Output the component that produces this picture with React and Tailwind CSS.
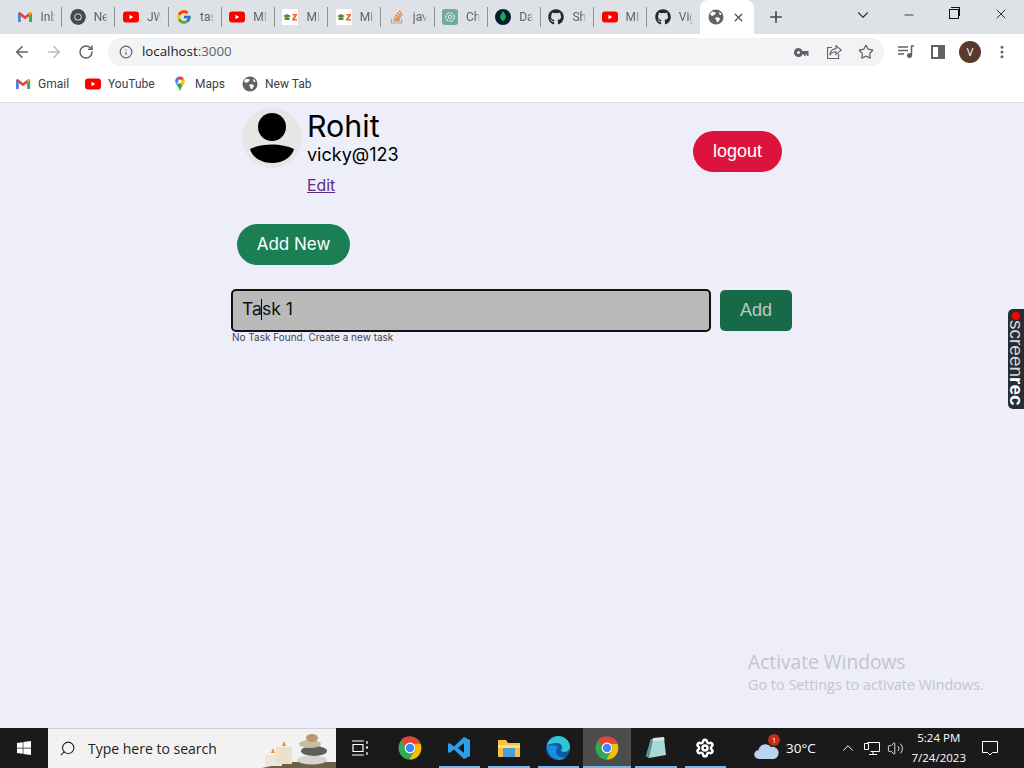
import React from 'react';
import { ArrowLeft, ArrowRight, RotateCw, Info, Star, X, Plus, ChevronDown, Minus, MoreVertical, Search, ChevronUp, Volume2, Settings } from 'lucide-react';
import { FaGithub, FaWindows } from 'react-icons/fa';
import { FcGoogle } from 'react-icons/fc';

const Gmail = ({ size = 16 }) => (
  <svg width={size} height={size} viewBox="0 0 16 16">
    <path d="M1 4v9h2.600V7l4.400 3.200L12.400 7v6H15V4l-1.500-1.200L8 7 2.500 2.800z" fill="#ea4335" />
    <path d="M1 4v9h2.600V6z" fill="#4285f4" />
    <path d="M15 4v9h-2.600V6z" fill="#34a853" />
    <path d="M15 4l-2.600 3V3.900l1.100-1.100z" fill="#fbbc04" />
  </svg>
);

const ChromeLogo = ({ size = 24, mono }) => (
  <svg width={size} height={size} viewBox="0 0 24 24">
    <circle cx="12" cy="12" r="11.500" fill={mono ? '#45484d' : '#34a853'} />
    <path d="M12 .5A11.500 11.500 0 0 1 22.200 7H12a5 5 0 0 0-4.700 3.200L3 3.800A11.500 11.500 0 0 1 12 .5z" fill={mono ? '#45484d' : '#ea4335'} />
    <path d="M22.500 8a11.500 11.500 0 0 1-11 15.500l5-8.500a5 5 0 0 0-.5-7z" fill={mono ? '#45484d' : '#fbbc04'} />
    <circle cx="12" cy="12" r="5.400" fill="#fff" />
    <circle cx="12" cy="12" r="4.200" fill={mono ? '#45484d' : '#4285f4'} />
  </svg>
);

const YouTube = () => (
  <svg width="16" height="16" viewBox="0 0 16 16">
    <rect y="2.500" width="16" height="11" rx="3" fill="#f00" />
    <path d="M6.500 5.800v4.400L10.300 8z" fill="#fff" />
  </svg>
);

const Ez = () => (
  <svg width="16" height="16" viewBox="0 0 16 16">
    <rect width="16" height="16" fill="#fff" />
    <path d="M1 7l4-2 4 2-4 2z" fill="#5b8a2d" />
    <path d="M2.500 8.500h5V11h-5z" fill="#5b8a2d" />
    <path d="M10.500 5h4.500v1.300L12.400 10H15v1.500h-5v-1.300L12.700 6.500h-2.200z" fill="#f26522" />
  </svg>
);

const StackOverflow = () => (
  <svg width="16" height="16" viewBox="0 0 16 16" fill="none">
    <path d="M2.500 10v4h10v-4" stroke="#a7a9ac" strokeWidth="1.200" />
    <path d="M4.500 12h6M4.700 10.200l5.900.8M5.200 8l5.600 1.800M6.200 5.700l5.100 3M8 3.500l4.200 4.200M10.300 1.500l2.900 5" stroke="#e87c25" strokeWidth="1.200" />
  </svg>
);

const ChatGpt = () => (
  <svg width="16" height="16" viewBox="0 0 16 16">
    <rect width="16" height="16" rx="3" fill="#74aa9c" />
    <circle cx="8" cy="8" r="4.300" fill="none" stroke="#e6f0ed" strokeWidth="1.100" strokeDasharray="3 1" />
    <circle cx="8" cy="8" r="1.700" fill="none" stroke="#e6f0ed" strokeWidth="0.900" />
  </svg>
);

const Mongo = () => (
  <svg width="16" height="16" viewBox="0 0 16 16">
    <circle cx="8" cy="8" r="8" fill="#001e2b" />
    <path d="M8 2.200c1.900 2.200 2.800 3.900 2.800 5.600 0 2-1.200 3.500-2.500 4.200L8 14l-.3-2c-1.300-.7-2.500-2.200-2.500-4.200 0-1.700.9-3.400 2.800-5.600z" fill="#13aa52" />
  </svg>
);

const Globe = () => (
  <svg width="16" height="16" viewBox="0 0 16 16">
    <circle cx="8" cy="8" r="7.500" fill="#5f6368" />
    <path d="M4.300 2.800c1.200.4 2.400.3 3.500.8.500.6-.3 1.500-1.200 1.900-.9.500-1.300 1.400-2.200 1.300C3.500 6.700 2.700 6 2 6c.3-1.400 1.200-2.500 2.300-3.200zM8.500 8.300c1.100-.2 2.400.2 3.200.9.600.6 0 1.500-.6 2.200-.5.700-1 1.700-1.900 2-.6-.5-.5-1.600-1-2.300-.5-.8-1-1.300-.8-2 .1-.4.600-.7 1.100-.8zM11.500 3c1 .7 1.800 1.800 2.200 3-.9.300-1.800-.1-2.300-.8-.4-.6-.3-1.500.1-2.200z" fill="#fff" />
  </svg>
);

const Maps = () => (
  <svg width="16" height="16" viewBox="0 0 16 16">
    <path d="M8 .5C5.200.5 3.200 2.600 3.200 5.200c0 1.200.4 2.100 1 3L8 4.200z" fill="#4285f4" />
    <path d="M4.200 8.200c1.300 1.900 3 3.700 3.800 7.300 0 0 .8-3.800 2.700-6L8 7z" fill="#34a853" />
    <path d="M8 .5c1.700 0 3 .8 3.900 1.900L8 6.400 5 3z" fill="#ea4335" />
    <path d="M11.900 2.400c.6.800.9 1.800.9 2.800 0 1.600-1 3-2.100 4.300L7 6z" fill="#fbbc04" />
    <circle cx="8" cy="5.200" r="1.700" fill="#fff" />
  </svg>
);

const tabs = [
  { icon: <Gmail />, label: 'Inb' },
  { icon: <ChromeLogo size={16} mono />, label: 'Ne' },
  { icon: <YouTube />, label: 'JW' },
  { icon: <FcGoogle size={16} />, label: 'tas' },
  { icon: <YouTube />, label: 'MI' },
  { icon: <Ez />, label: 'MI' },
  { icon: <Ez />, label: 'MI' },
  { icon: <StackOverflow />, label: 'jav' },
  { icon: <ChatGpt />, label: 'Ch' },
  { icon: <Mongo />, label: 'Da' },
  { icon: <FaGithub size={16} className="text-[#24292f]" />, label: 'Sh' },
  { icon: <YouTube />, label: 'MI' },
  { icon: <FaGithub size={16} className="text-[#24292f]" />, label: 'Vig' },
];

const bookmarks = [
  { icon: <Gmail />, label: 'Gmail', width: 'w-[70px]' },
  { icon: <YouTube />, label: 'YouTube', width: 'w-[87px]' },
  { icon: <Maps />, label: 'Maps', width: 'w-[70px]' },
  { icon: <Globe />, label: 'New Tab', width: '' },
];

const TabStrip = () => (
  <div className="h-[34px] bg-[#dee1e6] flex pl-[9px] shrink-0">
    {tabs.map((tab, i) => (
      <div key={i} className="w-[53.2px] h-full flex items-center pl-[7.500px] shrink-0 relative">
        {tab.icon}
        <span className="ml-[8px] w-[14px] overflow-hidden whitespace-nowrap text-[12px] text-[#5f6368] font-['Roboto',sans-serif] [mask-image:linear-gradient(to_right,black_70%,transparent)]">{tab.label}</span>
        {i < tabs.length - 1 && <div className="absolute right-0 top-[7px] h-[20px] w-px bg-[#8f9296]" />}
      </div>
    ))}
    <div className="w-[54px] h-full bg-white rounded-t-[8px] flex items-center pl-[8px] shrink-0">
      <Globe />
      <X size={13} strokeWidth={2.200} className="ml-[8px] text-[#45484d]" />
    </div>
    <Plus size={18} strokeWidth={2.200} className="ml-[13px] mt-[8px] text-[#45484d]" />
    <div className="ml-auto flex h-full items-start pt-[6px]">
      <ChevronDown size={18} strokeWidth={1.500} className="mr-[30px] text-[#333]" />
      <Minus size={14} strokeWidth={1.300} className="mt-[2px] mr-[33px] text-[#111]" />
      <div className="relative w-[10px] h-[10px] mt-[3px] mr-[34px] border border-[#111] bg-[#dee1e6]">
        <div className="absolute -top-[3px] left-[1px] w-[9px] h-[9px] border-t border-r border-[#111]" />
      </div>
      <X size={16} strokeWidth={1.300} className="mr-[15px] text-[#111]" />
    </div>
  </div>
);

const Toolbar = () => (
  <div className="h-[34px] pt-[2px] bg-white flex items-center shrink-0">
    <ArrowLeft size={18} strokeWidth={2.200} className="ml-[13px] text-[#5f6368]" />
    <ArrowRight size={18} strokeWidth={2.200} className="ml-[14px] text-[#babcbe]" />
    <RotateCw size={16} strokeWidth={2.200} className="ml-[15px] text-[#5f6368]" />
    <div className="ml-[14px] w-[776px] h-[28px] rounded-full bg-[#f1f3f4] flex items-center pl-[11px] pr-[10px]">
      <Info size={14} strokeWidth={2} className="text-[#5f6368]" />
      <span className="ml-[9px] text-[13.300px] text-[#202124]">localhost<span className="text-[#5f6368]">:3000</span></span>
      <svg width="15" height="9" viewBox="0 0 15 9" className="ml-auto mr-[1px]">
        <path d="M4.500 0a4.500 4.500 0 1 0 4 6.500H10V8h1.500V6.500H13V8h1.500V3H8.500a4.500 4.500 0 0 0-4-3zm0 3a1.500 1.500 0 1 1 0 3 1.500 1.500 0 0 1 0-3z" fill="#5f6368" fillRule="evenodd" />
      </svg>
      <svg width="15" height="14" viewBox="0 0 15 14" fill="none" stroke="#5f6368" strokeWidth="1.100" className="ml-[17px]">
        <path d="M5 2.500H.6v11h11V9" />
        <path d="M9 .8l5.300 4.300L9 9.400V6.800c-3 0-5 1.300-6 3.500 0-3.900 2.500-6.300 6-6.700z" />
      </svg>
      <Star size={16} strokeWidth={1.800} className="ml-[16px] text-[#5f6368]" />
    </div>
    <svg width="16" height="14" viewBox="0 0 16 14" className="ml-[14px]" fill="none">
      <path d="M0 2h10M0 5.500h10M0 9h6" stroke="#5f6368" strokeWidth="1.300" />
      <path d="M13.500 1v9" stroke="#5f6368" strokeWidth="1.500" />
      <path d="M13 1h3" stroke="#5f6368" strokeWidth="1.500" />
      <circle cx="11.500" cy="10.500" r="2.500" fill="#5f6368" />
    </svg>
    <div className="ml-[17px] w-[14px] h-[14px] border-2 border-[#5f6368] flex justify-end">
      <div className="w-[5px] h-full bg-[#5f6368]" />
    </div>
    <div className="ml-[14px] w-[22px] h-[22px] rounded-full bg-[#5b3a2e] text-white text-[11px] flex items-center justify-center">V</div>
    <MoreVertical size={16} strokeWidth={2.500} className="ml-[13px] text-[#5f6368]" />
  </div>
);

const BookmarkBar = () => (
  <div className="h-[35px] pb-[2px] bg-white border-b border-[#d9dadc] flex items-center pl-[15px] shrink-0">
    {bookmarks.map((b) => (
      <div key={b.label} className={`flex items-center ${b.width}`}>
        {b.icon}
        <span className="ml-[7px] text-[12px] text-[#3c4043] font-['Roboto',sans-serif]">{b.label}</span>
      </div>
    ))}
  </div>
);

const Avatar = () => (
  <div className="w-[60px] h-[60px] rounded-full bg-[#e6e6e6] shrink-0 overflow-hidden">
    <svg width="60" height="60" viewBox="0 0 60 60">
      <circle cx="30" cy="19" r="14" fill="#000" />
      <path d="M8 41C14 38 22 36.500 30 36.500S46 38 52 41C50 49 41 55 30 55S10 49 8 41z" fill="#000" />
    </svg>
  </div>
);

const TodoPage = () => (
  <div className="flex-1 bg-[#eeeefb] relative overflow-hidden font-['Inter',sans-serif]">
    <div className="w-[561px] ml-[231px]">
      <div className="flex items-start pt-[5px] pl-[11px] pr-[10px]">
        <Avatar />
        <div className="ml-[5px] flex flex-col items-start">
          <div className="text-[30.400px] leading-[38px] text-black mt-[-1px]">Rohit</div>
          <div className="text-[18px] leading-[22px] text-black mt-[-1px]">vicky@123</div>
          <a className="text-[15.800px] leading-[20px] mt-[10px] underline text-[#5a2d82]">Edit</a>
        </div>
        <button className="ml-auto mt-[23px] w-[89px] h-[41px] rounded-full bg-[#dc143c] text-white text-[18px] font-['Liberation_Sans',sans-serif]">logout</button>
      </div>
      <button className="block ml-[6px] mt-[28px] w-[113px] h-[41px] rounded-full bg-[#1a7f55] text-white text-[17px]">Add New</button>
      <div className="flex items-center gap-[9px] mt-[24px]">
        <div className="w-[480px] h-[43px] rounded-[5px] border-2 border-[#111] bg-[#bababa] flex items-center pl-[9px] pb-[2px] text-[17.600px] text-[#111]">
          Ta<span className="inline-block w-px h-[21px] bg-black -mx-[0.500px]" />sk 1
        </div>
        <button className="w-[72px] h-[41px] rounded-[5px] bg-[#176a47] text-[#b9cbc2] text-[18px] font-['Liberation_Sans',sans-serif]">Add</button>
      </div>
      <div className="text-[10px] leading-[12px] text-[#444] ml-[1px] mt-[-1px]">No Task Found. Create a new task</div>
    </div>

    {/* screenrec widget */}
    <div className="absolute right-0 top-[206px] w-[16px] h-[100px] bg-[#282c34] rounded-l-[5px] flex flex-col items-center pt-[3px] overflow-hidden">
      <div className="w-[8px] h-[8px] rounded-full bg-[#f00] shrink-0" />
      <div className="[writing-mode:vertical-rl] text-[19px] leading-[16px] text-[#d8d8d8] font-['Liberation_Sans',sans-serif]">
        screen<span className="font-bold text-white">rec</span>
      </div>
    </div>

    {/* watermark */}
    <div className="absolute left-[748px] top-[546px] font-['Open_Sans',sans-serif] text-[#c4c4cc]">
      <div className="text-[19.200px] leading-[26px]">Activate Windows</div>
      <div className="text-[14.400px] leading-[20px]">Go to Settings to activate Windows.</div>
    </div>
  </div>
);

const Taskbar = () => (
  <div className="h-[40px] bg-[#1b1a1a] flex items-center shrink-0 text-white font-['Open_Sans',sans-serif]">
    <div className="w-[48px] flex justify-center">
      <FaWindows size={16} />
    </div>
    <div className="w-[288px] h-[40px] bg-[#f2f2f2] flex items-center pl-[11px] relative overflow-hidden border-t border-[#cfcfd6]">
      <Search size={17} strokeWidth={1.500} className="text-[#222] -scale-x-100" />
      <span className="ml-[12px] text-[14px] text-[#222]">Type here to search</span>
      <svg width="84" height="40" viewBox="0 0 84 40" className="absolute right-0 top-0">
        <path d="M5 40l33-7h46v7z" fill="#6b5f48" />
        <rect x="13" y="26" width="17" height="11" fill="#efe6d4" />
        <rect x="24" y="18" width="16" height="17" fill="#ece2cc" />
        <path d="M21 19l2 5h-4zM32 12l2 5h-4z" fill="#f08a2c" />
        <ellipse cx="60" cy="31" rx="15" ry="4.500" fill="#d4d4d0" />
        <ellipse cx="62" cy="22" rx="13" ry="5" fill="#5e5e5c" />
        <ellipse cx="58" cy="15" rx="11" ry="4" fill="#c9bca4" />
        <ellipse cx="60" cy="9" rx="6" ry="4" fill="#b8986c" />
      </svg>
    </div>
    <div className="w-[49px] flex justify-center">
      <svg width="17" height="16" viewBox="0 0 17 16" fill="none" stroke="#fff" strokeWidth="1.200">
        <path d="M0 1h12M0 15h12M1 4.500h10v7H1zM15 1v3M15 12v3" />
        <rect x="14" y="6.500" width="2" height="2" fill="#fff" stroke="none" />
      </svg>
    </div>
    <div className="w-[49.500px] h-full flex justify-center items-center"><ChromeLogo size={24} /></div>
    <div className="w-[49.500px] h-full flex justify-center items-center relative">
      <svg width="24" height="24" viewBox="0 0 24 24">
        <path d="M17 1l6 3v16l-6 3L7 13.500 2.500 17 1 16V8l1.500-1L7 10.500zM17 7l-6 5 6 5z" fill="#2b9fe8" fillRule="evenodd" />
      </svg>
      <div className="absolute bottom-0 inset-x-[4px] h-[2px] bg-[#76b9ed]" />
    </div>
    <div className="w-[49.500px] h-full flex justify-center items-center relative">
      <svg width="24" height="20" viewBox="0 0 24 20">
        <path d="M1 2h8l2 3h12v14H1z" fill="#f5c33b" />
        <rect x="6" y="10" width="12" height="9" fill="#4a9fd8" />
        <path d="M1 7h22v3H1z" fill="#ffdf7e" />
      </svg>
      <div className="absolute bottom-0 inset-x-[4px] h-[2px] bg-[#76b9ed]" />
    </div>
    <div className="w-[49.500px] h-full flex justify-center items-center relative">
      <svg width="24" height="24" viewBox="0 0 24 24">
        <circle cx="12" cy="12" r="12" fill="#0c59a4" />
        <path d="M1 9C2.500 3.500 7 0 12 0c7 0 12 5 12 11 0 3.500-3 5-6 5-2 0-3-1-3-2 1-1 1.500-2 1-3.500C15 7.500 12 6.500 9 7c-3.500.500-6 1.500-8 2z" fill="#2cc6d8" />
        <path d="M1 9c-.5 7 4 14 12 15 3.500 0 6-1.500 7-3-3 1-7 .5-9-2.500-1.500-2.500-1-6 1-8-4-2-9-1-11-1.500z" fill="#1a8ed8" />
      </svg>
      <div className="absolute bottom-0 inset-x-[4px] h-[2px] bg-[#76b9ed]" />
    </div>
    <div className="w-[48px] h-full flex justify-center items-center relative bg-[#4d4d4d]">
      <ChromeLogo size={24} />
      <div className="absolute bottom-0 inset-x-0 h-[2px] bg-[#76b9ed]" />
    </div>
    <div className="w-[49.500px] h-full flex justify-center items-center relative">
      <svg width="24" height="24" viewBox="0 0 24 24">
        <path d="M7 3l13-1 2 17-17 3-3-2z" fill="#a8d8d8" />
        <path d="M7 3L2 20l3 2 4-18z" fill="#5e8f94" />
        <path d="M9 2l11-1 .5 3-11 1z" fill="#dfe8e4" />
      </svg>
      <div className="absolute bottom-0 inset-x-[4px] h-[2px] bg-[#76b9ed]" />
    </div>
    <div className="w-[49.500px] h-full flex justify-center items-center relative">
      <Settings size={20} strokeWidth={3} />
      <div className="absolute bottom-0 inset-x-[4px] h-[2px] bg-[#76b9ed]" />
    </div>
    <div className="ml-[24px] relative w-[25px] h-[24px]">
      <svg width="25" height="20" viewBox="0 0 25 20" className="absolute bottom-0 left-0">
        <path d="M5 19a4.500 4.500 0 0 1-.5-9A7 7 0 0 1 17 7a5.500 5.500 0 0 1 3 12z" fill="#b9d4f0" />
      </svg>
      <div className="absolute -top-[2px] right-[-1px] w-[12px] h-[12px] rounded-full bg-[#c42b1c] text-[8px] leading-[12px] text-center">1</div>
    </div>
    <span className="ml-[7px] text-[13.500px]">30°C</span>
    <ChevronUp size={18} strokeWidth={1.300} className="ml-[23px]" />
    <svg width="16" height="16" viewBox="0 0 16 16" fill="none" stroke="#fff" className="ml-[7px]">
      <path d="M3.500 2.500h12v9h-9M.500 3.500h4v6h-4zM9 11.500v3M5 14.500h8" />
    </svg>
    <Volume2 size={17} strokeWidth={1.200} className="ml-[7px]" />
    <div className="ml-[2px] w-[66px] text-center text-[11.500px] leading-[20px]">
      <div>5:24 PM</div>
      <div>7/24/2023</div>
    </div>
    <svg width="16" height="16" viewBox="0 0 16 16" fill="none" stroke="#fff" className="ml-[10px]">
      <path d="M.5 1.500h15v11h-5L8 15l-2.500-2.500h-5z" />
    </svg>
  </div>
);

export default function App() {
  return (
    <div className="w-[1024px] h-[768px] flex flex-col overflow-hidden font-['Open_Sans',sans-serif]">
      <TabStrip />
      <Toolbar />
      <BookmarkBar />
      <TodoPage />
      <Taskbar />
    </div>
  );
}
